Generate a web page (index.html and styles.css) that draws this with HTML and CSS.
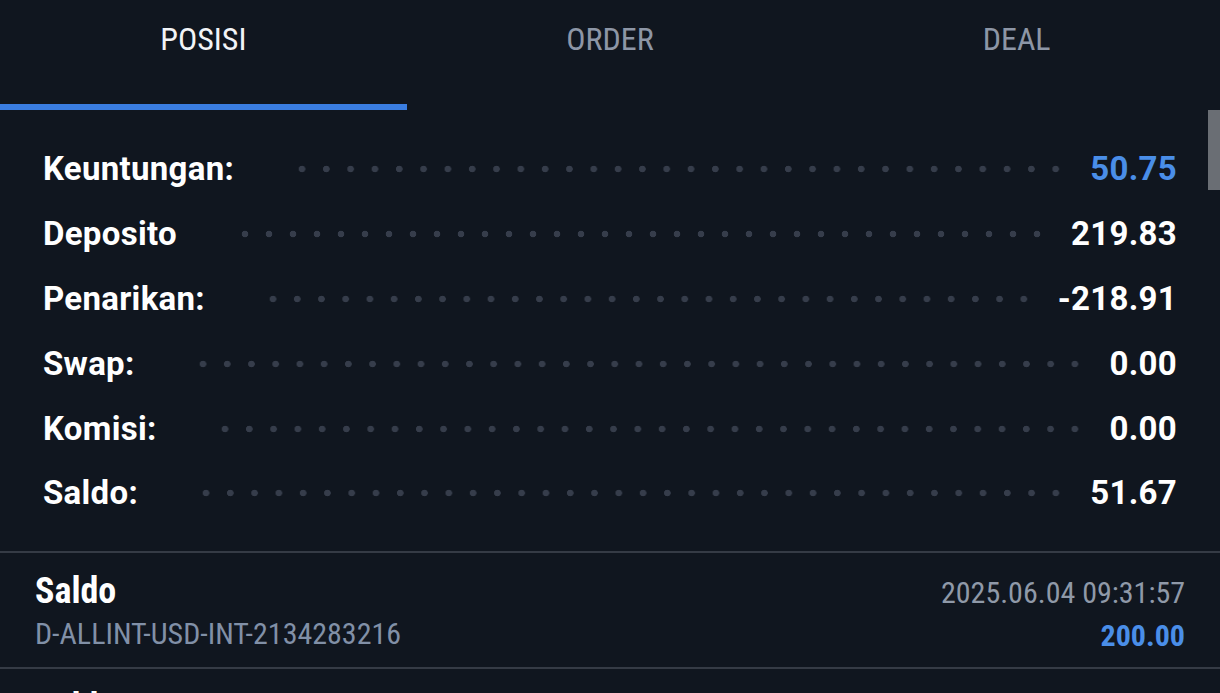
FILE: index.html
```html
<!DOCTYPE html>
<html>
<head>
<meta charset="utf-8">
<link rel="stylesheet" href="styles.css">
</head>
<body>
<div class="app">
  <nav class="tabs">
    <div class="tab active"><span>POSISI</span></div>
    <div class="tab"><span>ORDER</span></div>
    <div class="tab"><span>DEAL</span></div>
  </nav>
  <div class="scroll">
    <section class="summary">
      <div class="row"><span class="label">Keuntungan:</span><span class="dots"></span><span class="value blue">50.75</span></div>
      <div class="row"><span class="label">Deposito</span><span class="dots"></span><span class="value">219.83</span></div>
      <div class="row"><span class="label">Penarikan:</span><span class="dots"></span><span class="value">-218.91</span></div>
      <div class="row"><span class="label">Swap:</span><span class="dots"></span><span class="value">0.00</span></div>
      <div class="row"><span class="label">Komisi:</span><span class="dots"></span><span class="value">0.00</span></div>
      <div class="row"><span class="label">Saldo:</span><span class="dots"></span><span class="value">51.67</span></div>
    </section>
    <section class="deals">
      <div class="deal">
        <div class="deal-left">
          <div class="deal-title">Saldo</div>
          <div class="deal-sub">D-ALLINT-USD-INT-2134283216</div>
        </div>
        <div class="deal-right">
          <div class="deal-date">2025.06.04 09:31:57</div>
          <div class="deal-amount">200.00</div>
        </div>
      </div>
      <div class="deal">
        <div class="deal-left">
          <div class="deal-title">Saldo</div>
          <div class="deal-sub">D-ALLINT-USD-INT-2134283216</div>
        </div>
        <div class="deal-right">
          <div class="deal-date">2025.06.04 09:31:57</div>
          <div class="deal-amount">200.00</div>
        </div>
      </div>
    </section>
    <div class="scrollbar"></div>
  </div>
</div>
</body>
</html>
```
FILE: styles.css
```css
* { box-sizing: border-box; }
html, body { margin: 0; padding: 0; }
body {
  background: #10161f;
  width: 1220px;
  height: 693px;
  overflow: hidden;
  font-family: Roboto, "Liberation Sans", sans-serif;
}
.app { width: 1220px; height: 693px; display: flex; flex-direction: column; }
.tabs {
  display: grid;
  grid-template-columns: 1fr 1fr 1fr;
  height: 110px;
  flex: none;
}
.tab {
  display: flex;
  justify-content: center;
  padding-top: 19px;
  border-bottom: 6px solid transparent;
}
.tab span {
  font-family: "Roboto Condensed", Roboto, sans-serif;
  font-size: 32px;
  color: #8d96a6;
  line-height: 40px;
}
.tab.active { border-bottom-color: #3a7de0; }
.tab.active span { color: #f2f4f7; }
.scroll { position: relative; flex: 1; overflow: hidden; }
.scrollbar {
  position: absolute;
  right: 0;
  top: 0;
  width: 12px;
  height: 80px;
  background: #6a6e74;
}
.summary {
  padding: 27px 43px 25px 43px;
  border-bottom: 2px solid #353b45;
}
.row {
  display: flex;
  align-items: center;
  height: 64.8px;
}
.label, .value {
  font-size: 33px;
  font-weight: 700;
  color: #ffffff;
  line-height: 36px;
  letter-spacing: 0.3px;
}
.value { text-align: right; }
.value.blue { color: #4a8ee8; }
.dots {
  flex: 1;
  height: 8px;
  margin: 0 22px 0 56px;
  background-image: radial-gradient(circle, #363d4b 3px, transparent 3.6px);
  background-size: 24px 8px;
  background-repeat: space no-repeat;
}
.deal {
  display: flex;
  justify-content: space-between;
  padding: 16px 35px 0 35px;
  border-bottom: 2px solid #353b45;
  height: 116px;
}
.deal-left, .deal-right { display: flex; flex-direction: column; }
.deal-right { align-items: flex-end; }
.deal-title {
  font-family: "Roboto Condensed", Roboto, sans-serif;
  font-size: 36px;
  font-weight: 700;
  color: #ffffff;
  line-height: 44px;
}
.deal-sub {
  font-family: "Roboto Condensed", Roboto, sans-serif;
  font-size: 30px;
  color: #8190a7;
  line-height: 42px;
}
.deal-date {
  font-family: "Roboto Condensed", Roboto, sans-serif;
  font-size: 30px;
  color: #8f99a8;
  line-height: 48px;
}
.deal-amount {
  font-family: "Roboto Condensed", Roboto, sans-serif;
  font-size: 30px;
  font-weight: 700;
  color: #4a8ee8;
  line-height: 38px;
}
```
